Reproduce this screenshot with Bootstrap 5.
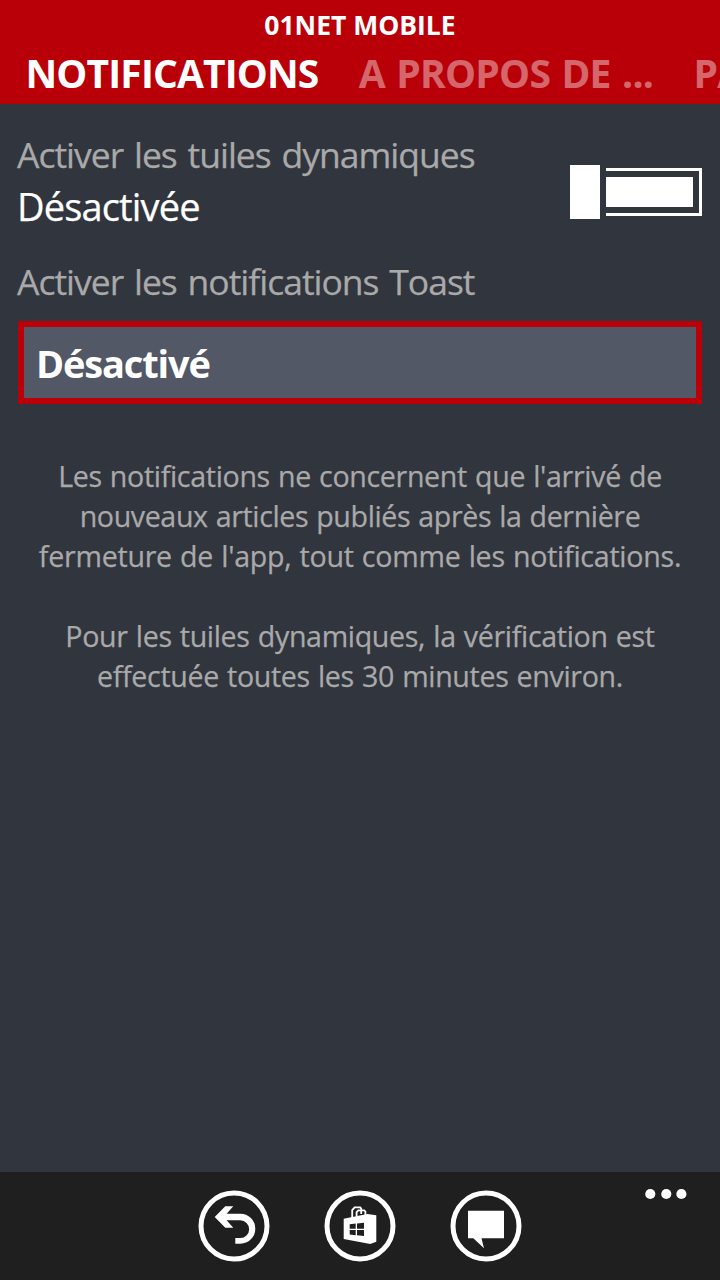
<!DOCTYPE html>
<html lang="fr"><head><meta charset="utf-8"><title>01net Mobile</title>
<link href="https://cdn.jsdelivr.net/npm/bootstrap@5.3.0/dist/css/bootstrap.min.css" rel="stylesheet">
<style>
body{background:#31353e;color:#fff;font-family:"Open Sans","Noto Sans",sans-serif;width:720px;height:1280px}
.top{background:#b90009;height:103.5px}
.apptitle{font-size:26.5px;line-height:50px}
.tabs{font-size:39px;line-height:45px;padding-left:25.5px;gap:40.3px;letter-spacing:-.75px;word-spacing:2px}
.tabs .current{letter-spacing:-.85px}
.dim{opacity:.4}
.lbl{font-size:35.5px;line-height:50px;color:#a9a9a9;letter-spacing:-1px;word-spacing:2.5px;margin-left:-1px;-webkit-text-stroke:.25px}
.state{font-size:38px;line-height:54px;letter-spacing:-.85px;margin-left:-1px;-webkit-text-stroke:.25px}
.page{padding:25px 18px 0}
.toast-label{margin-top:23px}
.picker{height:82.5px;border:6px solid #b90009;background:#525866;font-size:38px;margin-top:15.5px;padding:3px 0 0 12px;letter-spacing:-1.15px}
.note{font-size:28.6px;line-height:40px;color:#a9a9a9;margin-top:52px;letter-spacing:-.33px;word-spacing:1px;-webkit-text-stroke:.25px}
.note .snug{letter-spacing:-.38px}
.note .loose{letter-spacing:-.26px}
.toggle{margin-top:36.5px;gap:6px;height:54px}
.knob{width:30px;height:54px}
.track{width:96px;height:48px;border:3px solid #fff;border-left:0;padding:6px 6px 6px 0}
.appbar{background:#1f1f1f;height:108.5px;padding-top:18.5px;gap:54px}
.appbar .round{width:72px;height:72px}
.more{right:33.5px;top:16.5px}
</style></head>
<body class="d-flex flex-column overflow-hidden">
<header class="top overflow-hidden fw-bold flex-shrink-0">
<div class="apptitle text-center">01NET MOBILE</div>
<nav class="tabs d-flex text-nowrap"><span class="current">NOTIFICATIONS</span><span class="dim">A PROPOS DE ...</span><span class="dim">PA</span></nav>
</header>
<main class="page flex-grow-1">
<div class="d-flex justify-content-between">
<div><div class="lbl">Activer les tuiles dynamiques</div><div class="state">Désactivée</div></div>
<div class="toggle d-flex"><div class="knob bg-white"></div><div class="track align-self-center"><div class="bg-white h-100"></div></div></div>
</div>
<div class="lbl toast-label">Activer les notifications Toast</div>
<div class="picker fw-bold d-flex align-items-center">Désactivé</div>
<div class="note text-center text-nowrap">Les notifications ne concernent que l'arrivé de<br><span class="snug">nouveaux articles publiés après la dernière</span><br><span class="loose">fermeture de l'app, tout comme les notifications.</span><br><br>Pour les tuiles dynamiques, la vérification est<br>effectuée toutes les 30 minutes environ.</div>
</main>
<footer class="appbar d-flex justify-content-center position-relative flex-shrink-0">
<svg class="round" viewBox="0 0 72 72"><circle cx="36" cy="36" r="33" fill="none" stroke="#fff" stroke-width="5"/><path fill="#fff" d="M16.7 27 27.3 16.3H35.3L28.6 23.7H42.3A15 15 0 0 1 42.3 53.7H37.3V48H42.3A8.85 8.85 0 0 0 42.3 30.3H28.6L35.3 37.7H27.3Z"/></svg>
<svg class="round" viewBox="0 0 72 72"><circle cx="36" cy="36" r="33" fill="none" stroke="#fff" stroke-width="5"/>
<path fill="none" stroke="#fff" stroke-width="1.8" d="M28.2 28V20.2L30.6 17.4H36.2L37.2 18.6V24M32.6 26.5V22.2L34.4 20.3H40.2L41.4 21.6V25"/>
<path fill="#fff" fill-rule="evenodd" d="M19.7 28.7 43.3 24 52.3 25.3V51.7L46.3 54 19.7 49ZM25.7 34.2V38.8H31.7V33.6ZM33 33.4V38.8H40V32.7ZM25.7 40.1V44.6L31.7 45.2V40.1ZM33 40.1V45.3L40 46V40.1Z"/></svg>
<svg class="round" viewBox="0 0 72 72"><circle cx="36" cy="36" r="33" fill="none" stroke="#fff" stroke-width="5"/><path fill="#fff" d="M18 20.7H54V48.3H31.5L34 58.3 23.3 48.3H18Z"/></svg>
<svg class="more position-absolute" width="42" height="12" viewBox="0 0 42 12" fill="#fff"><circle cx="5.3" cy="6" r="5.1"/><circle cx="21.3" cy="6" r="5.1"/><circle cx="36.4" cy="6" r="5.1"/></svg>
</footer>
<script src="https://cdn.jsdelivr.net/npm/bootstrap@5.3.0/dist/js/bootstrap.bundle.min.js"></script>
</body></html>
